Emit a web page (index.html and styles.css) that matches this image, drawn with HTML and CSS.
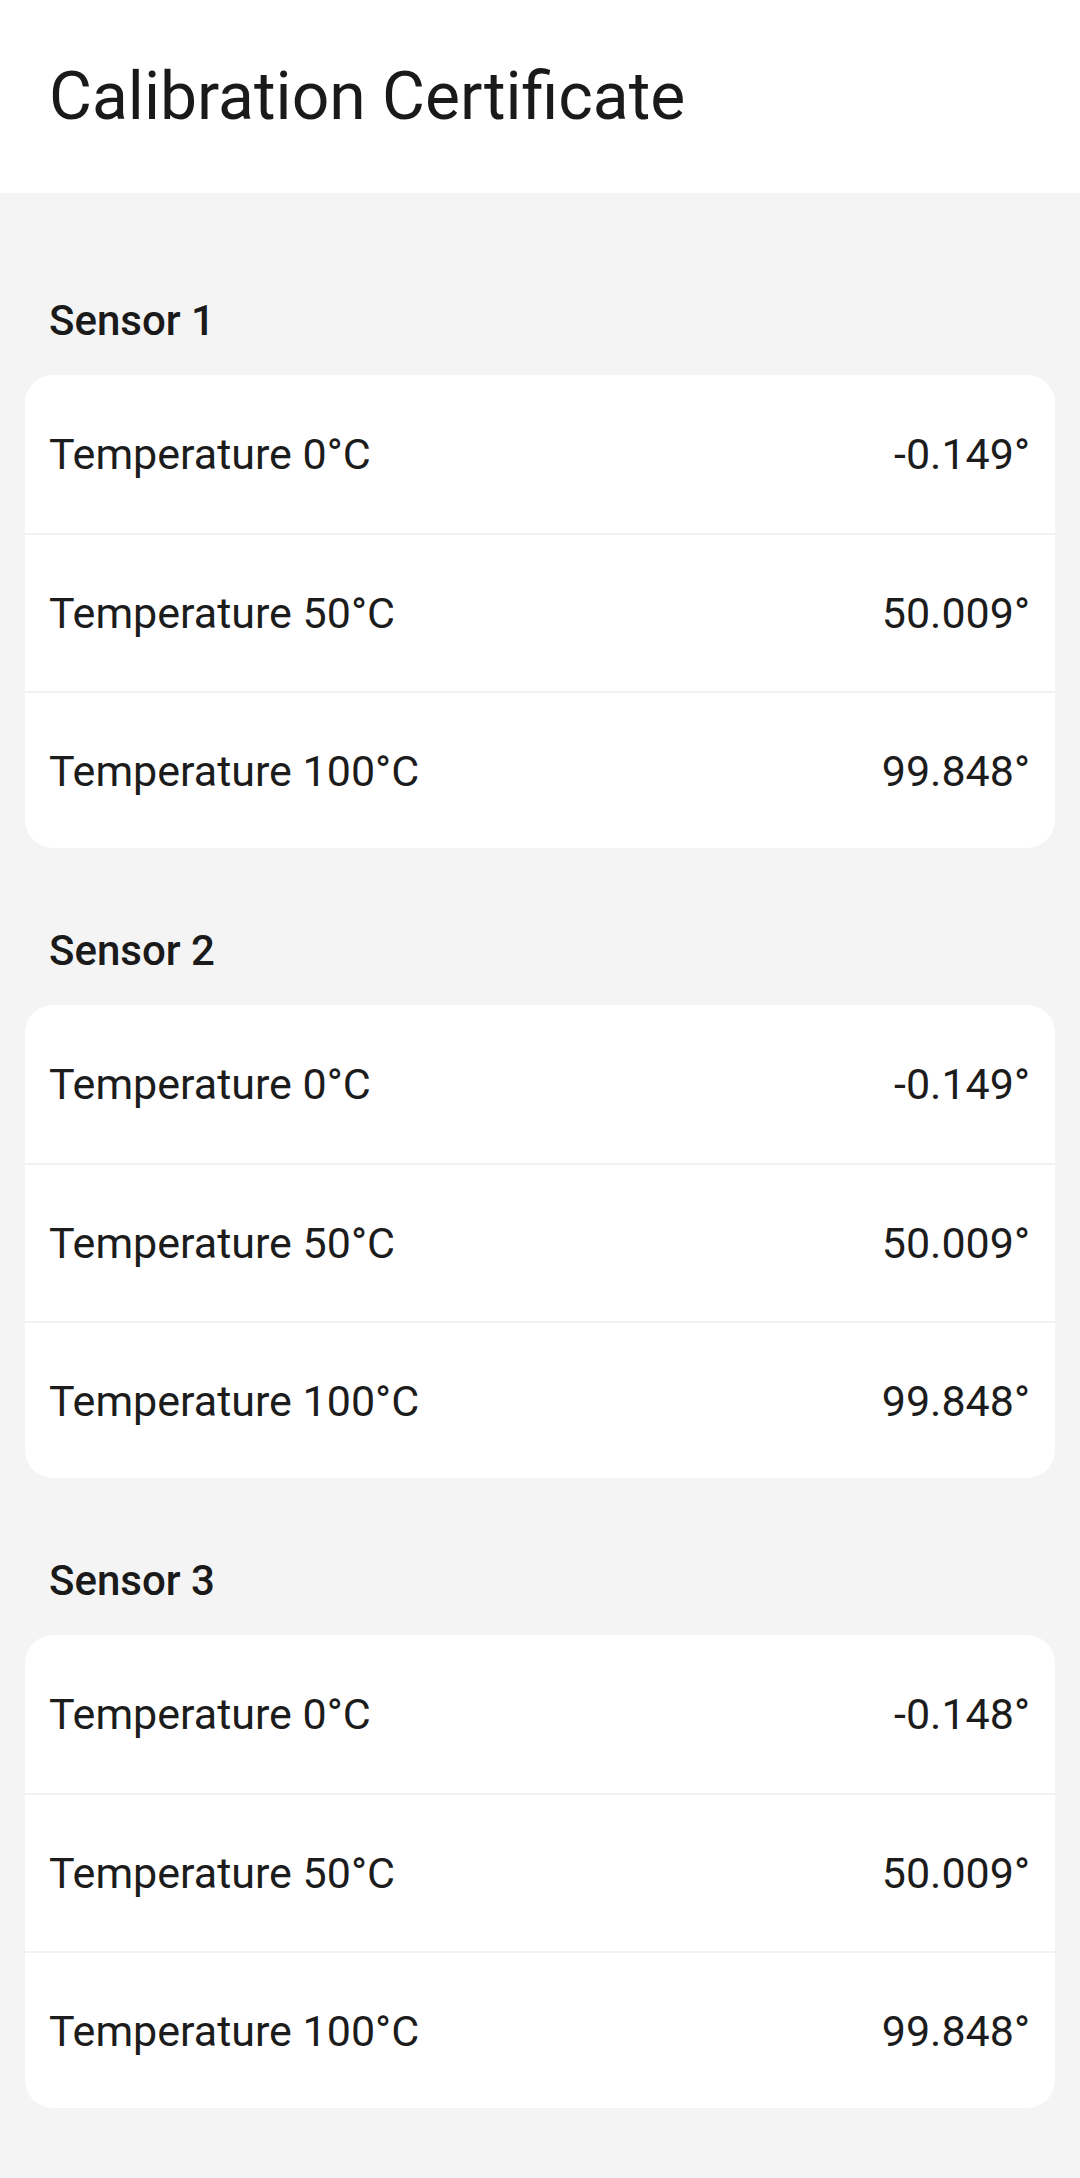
FILE: index.html
```html
<!DOCTYPE html>
<html lang="en">
<head>
<meta charset="utf-8">
<title>Calibration Certificate</title>
<link rel="stylesheet" href="styles.css">
</head>
<body>
<header class="app-bar">
  <h1 class="title">Calibration Certificate</h1>
</header>
<main class="content">
  <section class="sensor">
    <h2 class="sensor-title">Sensor 1</h2>
    <div class="card">
      <div class="row"><span class="label">Temperature 0°C</span><span class="value">-0.149°</span></div>
      <div class="row"><span class="label">Temperature 50°C</span><span class="value">50.009°</span></div>
      <div class="row"><span class="label">Temperature 100°C</span><span class="value">99.848°</span></div>
    </div>
  </section>
  <section class="sensor">
    <h2 class="sensor-title">Sensor 2</h2>
    <div class="card">
      <div class="row"><span class="label">Temperature 0°C</span><span class="value">-0.149°</span></div>
      <div class="row"><span class="label">Temperature 50°C</span><span class="value">50.009°</span></div>
      <div class="row"><span class="label">Temperature 100°C</span><span class="value">99.848°</span></div>
    </div>
  </section>
  <section class="sensor">
    <h2 class="sensor-title">Sensor 3</h2>
    <div class="card">
      <div class="row"><span class="label">Temperature 0°C</span><span class="value">-0.148°</span></div>
      <div class="row"><span class="label">Temperature 50°C</span><span class="value">50.009°</span></div>
      <div class="row"><span class="label">Temperature 100°C</span><span class="value">99.848°</span></div>
    </div>
  </section>
</main>
</body>
</html>
```

FILE: styles.css
```css
html, body {
  margin: 0;
  padding: 0;
}
body {
  background: #f4f4f4;
  font-family: Roboto, "Noto Sans", "Liberation Sans", sans-serif;
  color: #1c1c1c;
  min-height: 100vh;
}
.app-bar {
  background: #ffffff;
  height: 193px;
  display: flex;
  align-items: center;
  padding: 0 49px;
  box-sizing: border-box;
}
.title {
  margin: 0;
  font-size: 66px;
  font-weight: 400;
  line-height: 75px;
  color: #1a1a1a;
}
.content {
  padding: 25px 25px 0 25px;
}
.sensor-title {
  margin: 78px 0 29px 24px;
  font-size: 42px;
  font-weight: 500;
  line-height: 50px;
  color: #1a1a1a;
}
.card {
  background: #ffffff;
  border-radius: 28px;
  overflow: hidden;
}
.row {
  height: 158px;
  display: flex;
  align-items: center;
  justify-content: space-between;
  padding: 0 25px 0 24px;
  font-size: 43px;
  box-sizing: border-box;
}
.row + .row {
  border-top: 2px solid #f2f2f2;
  height: 158px;
}
.row:last-child {
  height: 157px;
}
.label, .value {
  line-height: 50px;
}
```
